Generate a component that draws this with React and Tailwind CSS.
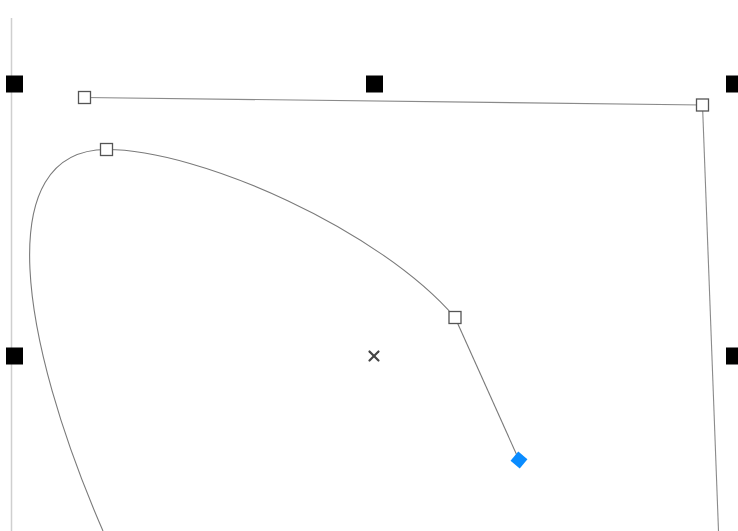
export default function App() {
  const black = [
    [14.5, 84],
    [374.5, 84],
    [734.5, 84],
    [14.5, 356],
    [734.5, 356],
  ];
  const hollow = [
    [84.5, 97.5],
    [106.5, 149.5],
    [702.5, 105],
    [455, 317.5],
  ];
  return (
    <div className="w-[738px] h-[531px] bg-white overflow-hidden">
      <svg width="738" height="531" viewBox="0 0 738 531" className="block">
        <line x1="11.5" y1="18" x2="11.5" y2="531" stroke="#cfcfcf" strokeWidth="1.5" />
        <line x1="84.5" y1="97.5" x2="702.5" y2="105" stroke="#8a8a8a" strokeWidth="1.1" />
        <line x1="702.5" y1="105" x2="718.5" y2="531" stroke="#8a8a8a" strokeWidth="1.1" />
        <path
          d="M 103 531 C 20 340, -10 150, 106.5 149.5 C 200 149.5, 380 230, 455 317.5"
          fill="none"
          stroke="#7a7a7a"
          strokeWidth="1.1"
        />
        <line x1="455" y1="317.5" x2="519" y2="460" stroke="#7a7a7a" strokeWidth="1.1" />
        {black.map(([x, y], i) => (
          <rect key={i} x={x - 8.5} y={y - 8.5} width="17" height="17" fill="#000" />
        ))}
        {hollow.map(([x, y], i) => (
          <rect key={i} x={x - 6} y={y - 6} width="12" height="12" fill="#fff" stroke="#555" strokeWidth="1.3" />
        ))}
        <g stroke="#444" strokeWidth="2.2" strokeLinecap="round">
          <line x1="369.5" y1="351.5" x2="378.5" y2="360.5" />
          <line x1="378.5" y1="351.5" x2="369.5" y2="360.5" />
        </g>
        <rect x="513" y="454" width="12" height="12" fill="#0a8cff" transform="rotate(40 519 460)" />
      </svg>
    </div>
  );
}
